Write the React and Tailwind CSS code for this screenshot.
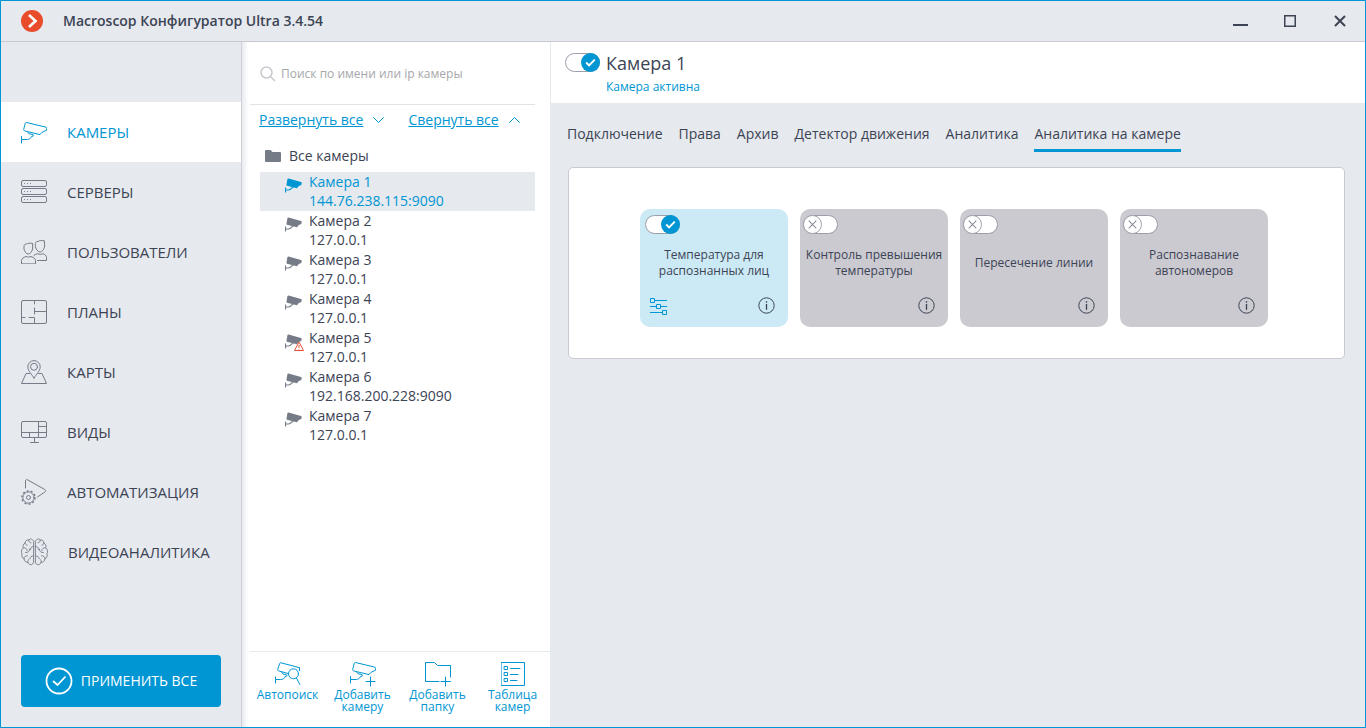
import { useState } from 'react'
import clsx from 'clsx'

const stroke = { fill: 'none', stroke: 'currentColor', strokeLinecap: 'round', strokeLinejoin: 'round' }

function Logo() {
  return (
    <svg width="22" height="22" viewBox="0 0 22 22" aria-hidden="true">
      <circle cx="11" cy="11" r="11" fill="#e84c2b" />
      <path d="M8 5l6.500 6L8 17" fill="none" stroke="#fff" strokeWidth="2.600" />
    </svg>
  )
}

const CAMERA = 'M4.500 .8C4.700 .5 5.200 .4 5.600 .5L25 5.200C25.700 5.400 25.700 6 25.600 6.600V8.200L21 10.300L19 12.600L4 9C3 8.700 2.500 8 2.700 7.300Z'
const CAMERA_ARM = 'M.5 14.500V21M.5 17.500H6.500C8.200 17.500 9.500 16.500 10.300 14.700L12.300 14L12 12.500L8 11.800L6.800 10.200'

function CameraIcon() {
  return (
    <svg width="26" height="24" viewBox="0 -2 26 24" {...stroke} aria-hidden="true">
      <path d={CAMERA} />
      <path d={CAMERA_ARM} />
    </svg>
  )
}

function ServersIcon() {
  return (
    <svg width="26" height="24" viewBox="0 0 26 24" {...stroke} aria-hidden="true">
      {[0.5, 8.5, 16.5].map((y) => (
        <g key={y}>
          <rect x=".5" y={y} width="25" height="6" rx="1.500" />
          <path d={`M3.500 ${y + 3}h.1M6.500 ${y + 3}h.1M9.500 ${y + 3}h.1`} />
        </g>
      ))}
    </svg>
  )
}

function UsersIcon() {
  return (
    <svg width="26" height="24" viewBox="0 0 26 24" {...stroke} aria-hidden="true">
      <path d="M3 6.500C3 4.500 4 4 5.500 4C7 3 9 3.200 11.500 3.300L11.700 8C11.500 11 9.500 14 7.300 14C5.200 14 3.300 11.500 3 9Z" />
      <path d="M.5 23.500V20.500C.5 18.500 3 17.200 5 16.500C7 17.200 8.500 17.200 10 16.500C12.500 17.500 14.500 18.500 14.500 20.500V23.500Z" />
      <path d="M14.300 5C14 2.500 15 1.500 17 1.500C18.500 .3 20.500 .5 23.300 .7L23.700 6C23.200 9 21.300 12 19 12C16.800 12 14.800 9 14.300 6.500Z" />
      <path d="M13 15.300C14 14.500 15.500 14 16.500 13.700C18.500 14.500 20 14.500 22 13.700C24 14.500 25.500 15.500 25.500 17.500V20.500H16.500" />
    </svg>
  )
}

function PlansIcon() {
  return (
    <svg width="26" height="24" viewBox="0 0 26 24" {...stroke} aria-hidden="true">
      <rect x=".5" y=".5" width="25" height="23" rx="1.500" />
      <path d="M13.500 .5V4M13.500 8V14M13.500 11.500H25.500M.5 17.500H4M8 17.500H13.500V23.500" />
    </svg>
  )
}

function MapsIcon() {
  return (
    <svg width="26" height="24" viewBox="0 0 26 24" {...stroke} aria-hidden="true">
      <path d="M13 18C11 14.500 6.800 11 6.800 6.800A6.200 6.200 0 0 1 19.200 6.800C19.200 11 15 14.500 13 18Z" />
      <circle cx="13" cy="6.800" r="3.500" />
      <path d="M8.500 13.500H5L.5 23.500H25.500L21 13.500H17.500" />
    </svg>
  )
}

function ViewsIcon() {
  return (
    <svg width="26" height="24" viewBox="0 -1 26 24" {...stroke} aria-hidden="true">
      <rect x=".5" y=".5" width="25" height="16" rx="1.500" />
      <path d="M17.500 .5V11.500M17.500 5.500H25.500M.5 11.500H25.500M8.500 11.500V16.500M17.500 11.500V16.500M13.500 16.500V21.500M9.500 21.500H17.500" />
    </svg>
  )
}

function AutomationIcon() {
  return (
    <svg width="26" height="26" viewBox="0 0 26 26" {...stroke} aria-hidden="true">
      <path d="M4.500 9V2C4.500 .8 5.500 .3 6.500 .8L23.800 10.500C25 11.200 25 12.300 23.800 13L16.500 18" />
      <circle cx="7.500" cy="18.500" r="2" />
      <circle cx="7.500" cy="18.500" r="5.600" />
      <circle cx="7.500" cy="18.500" r="6.600" strokeDasharray="2 2.150" strokeLinecap="butt" strokeWidth="1.500" />
    </svg>
  )
}

function BrainHalf() {
  return (
    <>
      <path d="M12.500 3C11.500 .8 9 .3 7.700 2C5.500 1.700 4 3.200 4.200 5C2.300 6 1.500 8 2.400 9.800C.3 11 0 14 1 15.700C.3 18 1.300 20 3 20.700C3.200 23 5 24.600 7 24.300C8 27.500 12 27.700 12.500 24.500Z" />
      <path d="M7.700 2C7.700 3.500 8.500 4.700 10 4.800M4.200 5C4.400 6.300 5 7 6.200 7.200M12.500 8.500C10 8.500 9.500 10 9.600 11.500M2.400 9.800C4 9.300 6 10.500 6.200 12.500M8.700 11C9 13 7 15 4.500 14.500M3 20.700C3 18.800 4.500 17.500 6.500 17.800M12.500 18C10.300 17.700 9 19 9 20.500M7 24.300C6.500 23 7 21.700 8 21.200" />
    </>
  )
}

function BrainIcon() {
  return (
    <svg width="27" height="28" viewBox="0 0 27 28" {...stroke} strokeWidth=".9" aria-hidden="true">
      <BrainHalf />
      <g transform="matrix(-1 0 0 1 27 0)">
        <BrainHalf />
      </g>
    </svg>
  )
}

function SmallCameraIcon({ warning }) {
  return (
    <svg width="20" height="20" viewBox="0 0 20 20" aria-hidden="true">
      <path d="M3.500 .6L16 4Q17 4.300 16.700 5.300L16.300 7L13.800 8L12 10.300L2 7.700Q1.300 7.400 1.500 6.500L2.400 1.200Q2.700 .4 3.500 .6Z" fill="currentColor" />
      <path d="M.5 9.500V14.500M.5 12H3.500Q5.500 12 6.500 10L8.500 9.500" fill="none" stroke="currentColor" strokeWidth="1.200" />
      {warning && (
        <g fill="#fff" stroke="#e8503a" strokeLinejoin="round">
          <path d="M14 8L18.500 16.500H9.500Z" />
          <path d="M14 11v3M14 15v.6" />
        </g>
      )}
    </svg>
  )
}

function FolderIcon() {
  return (
    <svg width="16" height="12" viewBox="0 0 16 12" fill="#757b87" aria-hidden="true">
      <path d="M0 1Q0 0 1 0H5.500L7.500 2H15Q16 2 16 3V11Q16 12 15 12H1Q0 12 0 11Z" />
    </svg>
  )
}

function AutoSearchIcon() {
  return (
    <svg width="26" height="25" viewBox="0 0 26 25" {...stroke} aria-hidden="true">
      <path d="M24.500 8V5.700L6 .8Q5 .5 4.700 1.500L2.700 7.500Q2.500 8.500 3.500 8.800L13 11.500M24.500 5.700V8.500" />
      <path d="M.5 15V21M.5 17.500H5.500C8 17.500 9.500 16.500 10 14.500L11.800 14M6.500 9.800L8 12L12 13" />
      <circle cx="18.500" cy="11.800" r="5" />
      <path d="M21.500 16L24.800 22.500" />
    </svg>
  )
}

function AddCameraIcon() {
  return (
    <svg width="26" height="25" viewBox="0 0 26 25" {...stroke} aria-hidden="true">
      <path d={CAMERA} />
      <path d={CAMERA_ARM} />
      <path d="M20.500 15V24M16 19.500H25" />
    </svg>
  )
}

function AddFolderIcon() {
  return (
    <svg width="26" height="25" viewBox="0 0 26 25" {...stroke} aria-hidden="true">
      <path d="M14 19.500H.5V.5H9.500L12.500 3.500H25.500V15M20.500 15V24M16 19.500H25.500" />
    </svg>
  )
}

function TableIcon() {
  return (
    <svg width="24" height="25" viewBox="0 0 24 25" {...stroke} aria-hidden="true">
      <rect x=".5" y=".5" width="23" height="23" />
      <path d="M3.500 4.500h3v3h-3zM3.500 10.500h3v3h-3zM3.500 16.500h3v3h-3zM9.500 6.500H19M9.500 12.500H17M9.500 18.500H16" />
    </svg>
  )
}

function SlidersIcon() {
  return (
    <svg width="18" height="18" viewBox="0 0 18 18" fill="none" stroke="#0096d3" aria-hidden="true">
      <path d="M.5 1.500h4v4h-4zM4.500 3.500H17M6.500 7.500h4v4h-4zM0 9.500H6.500M10.500 9.500H17M12.500 13.500h4v4h-4zM0 15.500H12.500" />
    </svg>
  )
}

function InfoIcon() {
  return (
    <svg width="17" height="17" viewBox="0 0 17 17" fill="none" stroke="#3c4454" aria-hidden="true">
      <circle cx="8.500" cy="8.500" r="7.700" />
      <path d="M8.500 4.300V5.700M8.500 7V12.700" strokeWidth="1.300" />
    </svg>
  )
}

const sections = [
  { name: 'КАМЕРЫ', icon: CameraIcon },
  { name: 'СЕРВЕРЫ', icon: ServersIcon },
  { name: 'ПОЛЬЗОВАТЕЛИ', icon: UsersIcon },
  { name: 'ПЛАНЫ', icon: PlansIcon },
  { name: 'КАРТЫ', icon: MapsIcon },
  { name: 'ВИДЫ', icon: ViewsIcon },
  { name: 'АВТОМАТИЗАЦИЯ', icon: AutomationIcon },
  { name: 'ВИДЕОАНАЛИТИКА', icon: BrainIcon },
]

const cameras = [
  { name: 'Камера 1', address: '144.76.238.115:9090' },
  { name: 'Камера 2', address: '127.0.0.1' },
  { name: 'Камера 3', address: '127.0.0.1' },
  { name: 'Камера 4', address: '127.0.0.1' },
  { name: 'Камера 5', address: '127.0.0.1', warning: true },
  { name: 'Камера 6', address: '192.168.200.228:9090' },
  { name: 'Камера 7', address: '127.0.0.1' },
]

const tools = [
  { name: 'Автопоиск', icon: AutoSearchIcon },
  { name: 'Добавить камеру', icon: AddCameraIcon },
  { name: 'Добавить папку', icon: AddFolderIcon },
  { name: 'Таблица камер', icon: TableIcon },
]

const tabs = ['Подключение', 'Права', 'Архив', 'Детектор движения', 'Аналитика', 'Аналитика на камере']

const initialModules = [
  { name: 'Температура для распознанных лиц', enabled: true },
  { name: 'Контроль превышения температуры', enabled: false },
  { name: 'Пересечение линии', enabled: false },
  { name: 'Распознавание автономеров', enabled: false },
]

function Toggle({ label, checked, onChange }) {
  return (
    <label className="relative block h-[19px] w-[35px] shrink-0 cursor-pointer">
      <input
        type="checkbox"
        aria-label={label}
        checked={checked}
        onChange={onChange}
        className="block h-[19px] w-[35px] cursor-pointer appearance-none rounded-full border border-[#9a9ea8] bg-white"
      />
      {checked ? (
        <svg className="pointer-events-none absolute top-0 right-0" width="19" height="19" viewBox="0 0 20 20" aria-hidden="true">
          <circle cx="10" cy="10" r="10" fill="#0096d3" />
          <path d="M5.500 10L8.500 13L14.500 7" fill="none" stroke="#fff" strokeWidth="2" />
        </svg>
      ) : (
        <svg className="pointer-events-none absolute top-0 left-0" width="19" height="19" viewBox="0 0 20 20" aria-hidden="true">
          <circle cx="10" cy="10" r="9.500" fill="#fff" stroke="#9a9ea8" />
          <path d="M6 6L14 14M14 6L6 14" fill="none" stroke="#8d919b" strokeWidth="1.200" />
        </svg>
      )}
    </label>
  )
}

function TitleBar() {
  return (
    <header className="flex h-[41px] shrink-0 items-center border-b border-[#c9cad1] pl-5">
      <Logo />
      <h1 className="ml-5 flex-1 text-sm font-semibold">Macroscop Конфигуратор Ultra 3.4.54</h1>
      <button aria-label="Свернуть" className="flex h-10 w-[50px] items-center justify-center">
        <svg width="16" height="12" viewBox="0 0 16 12"><path d="M1 10H16" stroke="#3c4454" strokeWidth="2" /></svg>
      </button>
      <button aria-label="Развернуть" className="flex h-10 w-[50px] items-center justify-center">
        <svg width="12" height="12" viewBox="0 0 12 12"><rect x=".75" y=".75" width="10.500" height="10.500" fill="none" stroke="#3c4454" strokeWidth="1.500" /></svg>
      </button>
      <button aria-label="Закрыть" className="flex h-10 w-[50px] items-center justify-center">
        <svg width="12" height="12" viewBox="0 0 12 12"><path d="M1 1L11 11M11 1L1 11" stroke="#3c4454" strokeWidth="2" /></svg>
      </button>
    </header>
  )
}

function Sidebar() {
  return (
    <aside className="flex w-[241px] shrink-0 flex-col border-r border-[#cfd0d8] pt-[60px]">
      <nav>
        {sections.map(({ name, icon: Icon }, i) => (
          <a
            key={name}
            href="#"
            className={clsx('flex h-[60px] items-center gap-5 pl-5 text-[15px]', i === 0 && 'bg-white text-[#0096d3]')}
          >
            <span className={clsx(i > 0 && 'text-[#757b87]')}>
              <Icon />
            </span>
            {name}
          </a>
        ))}
      </nav>
      <button className="mx-5 mt-auto mb-5 flex h-[52px] items-center justify-center gap-2 rounded-sm bg-[#0096d3] text-sm text-white">
        <svg width="28" height="28" viewBox="0 0 28 28" fill="none" stroke="#fff" strokeWidth="1.800" aria-hidden="true">
          <circle cx="14" cy="14" r="12.500" />
          <path d="M8 14L12.500 18L20.500 9.500" />
        </svg>
        ПРИМЕНИТЬ ВСЕ
      </button>
    </aside>
  )
}

function CameraTree({ selected, onSelect }) {
  return (
    <section className="flex w-[308px] shrink-0 flex-col bg-white pl-2 shadow-[inset_6px_0_5px_-3px_#e6e9ee]">
      <div className="mr-[15px] flex h-[63px] items-center gap-[5px] border-b border-[#e1e3e9] pt-0.5 pl-2.5">
        <svg width="16" height="16" viewBox="0 0 16 16" fill="none" stroke="#c9cad1" strokeWidth="1.500" aria-hidden="true">
          <circle cx="6.500" cy="6.500" r="5.500" />
          <path d="M10.500 10.500L15 15" />
        </svg>
        <input
          type="search"
          aria-label="Поиск камеры"
          placeholder="Поиск по имени или ip камеры"
          className="min-w-0 flex-1 text-xs outline-none placeholder:text-[#a6a7ab]"
        />
      </div>

      <div className="flex h-[30px] items-center pl-[9px] text-sm text-[#0096d3]">
        <a href="#" className="underline">Развернуть все</a>
        <svg className="ml-2.5" width="11" height="6" viewBox="0 0 11 6" {...stroke} aria-hidden="true"><path d="M.5 .5L5.500 5.500L10.500 .5" /></svg>
        <a href="#" className="ml-6 underline">Свернуть все</a>
        <svg className="ml-2.5" width="11" height="6" viewBox="0 0 11 6" {...stroke} aria-hidden="true"><path d="M.5 5.500L5.500 .5L10.500 5.500" /></svg>
      </div>

      <div className="mt-3 flex h-[18px] items-center gap-2 pl-[15px] text-sm">
        <FolderIcon />
        Все камеры
      </div>
      <ul className="mt-[7px] mr-[15px] ml-2.5">
        {cameras.map((camera, i) => (
          <li key={camera.name}>
            <button
              onClick={() => onSelect(i)}
              className={clsx(
                'flex w-full gap-1 pb-px pl-[25px] text-left text-sm/[19px]',
                i === selected && 'bg-[#e6e9ee] text-[#0096d3]'
              )}
            >
              <span className={clsx('pt-1.5', i !== selected && 'text-[#757b87]')}>
                <SmallCameraIcon warning={camera.warning} />
              </span>
              <span>
                {camera.name}
                <br />
                {camera.address}
              </span>
            </button>
          </li>
        ))}
      </ul>

      <div className="mt-auto grid h-[76px] grid-cols-4 border-t border-[#e6e9ee] pt-2.5 text-xs/[12px] text-[#0096d3]">
        {tools.map(({ name, icon: Icon }) => (
          <button key={name} className="flex flex-col items-center gap-0.5 px-1">
            <Icon />
            <span>{name}</span>
          </button>
        ))}
      </div>
    </section>
  )
}

function ModuleCard({ name, enabled, onToggle }) {
  return (
    <article className={clsx('flex h-[118px] w-[148px] flex-col rounded-[10px] pt-1.5', enabled ? 'bg-[#cceaf6]' : 'bg-[#cbcad1]')}>
      <div className={enabled ? 'pl-[5px]' : 'pl-[3px]'}>
        <Toggle label={name} checked={enabled} onChange={onToggle} />
      </div>
      <h3 className="flex flex-1 items-center justify-center px-1 text-center text-xs/[16px]">{name}</h3>
      <div className="flex h-9 items-start pt-1.5 pr-[13px] pl-2.5">
        {enabled && (
          <button aria-label="Настроить">
            <SlidersIcon />
          </button>
        )}
        <button aria-label="Информация" className="ml-auto">
          <InfoIcon />
        </button>
      </div>
    </article>
  )
}

export default function App() {
  const [selected, setSelected] = useState(0)
  const [tab, setTab] = useState(tabs.length - 1)
  const [active, setActive] = useState(true)
  const [modules, setModules] = useState(initialModules)

  const toggleModule = (index) => {
    setModules(modules.map((m, i) => (i === index ? { ...m, enabled: !m.enabled } : m)))
  }

  return (
    <div className="flex min-h-screen flex-col border border-[#0096d3] bg-[#e6e9ee] font-['Open_Sans',sans-serif] text-[#3c4454]">
      <TitleBar />
      <div className="flex flex-1">
        <Sidebar />
        <CameraTree selected={selected} onSelect={setSelected} />

        <main className="min-w-0 flex-1 border-l border-[#e6e9ee]">
          {/* Camera header */}
          <div className="flex h-[61px] gap-1.5 bg-white pt-[11px] pl-3.5">
            <Toggle label="Камера активна" checked={active} onChange={() => setActive(!active)} />
            <div>
              <h2 className="text-lg/5">{cameras[selected].name}</h2>
              <p className="mt-1.5 text-xs/[16px] text-[#0096d3]">{active ? 'Камера активна' : 'Камера отключена'}</p>
            </div>
          </div>

          {/* Tabs */}
          <div role="tablist" className="flex gap-4 pt-[21px] pl-4 text-sm">
            {tabs.map((name, i) => (
              <button
                key={name}
                role="tab"
                aria-selected={i === tab}
                onClick={() => setTab(i)}
                className={clsx('h-7 border-b-3 pb-[5px]', i === tab ? 'border-[#0096d3]' : 'border-transparent')}
              >
                {name}
              </button>
            ))}
          </div>

          {/* Camera side analytics */}
          <div className="mt-[15px] mr-5 ml-[17px] flex flex-wrap justify-center gap-3 rounded-[5px] border border-[#c9cad1] bg-white pt-[41px] pr-[5px] pb-[31px]">
            {modules.map((m, i) => (
              <ModuleCard key={m.name} name={m.name} enabled={m.enabled} onToggle={() => toggleModule(i)} />
            ))}
          </div>
        </main>
      </div>
    </div>
  )
}
